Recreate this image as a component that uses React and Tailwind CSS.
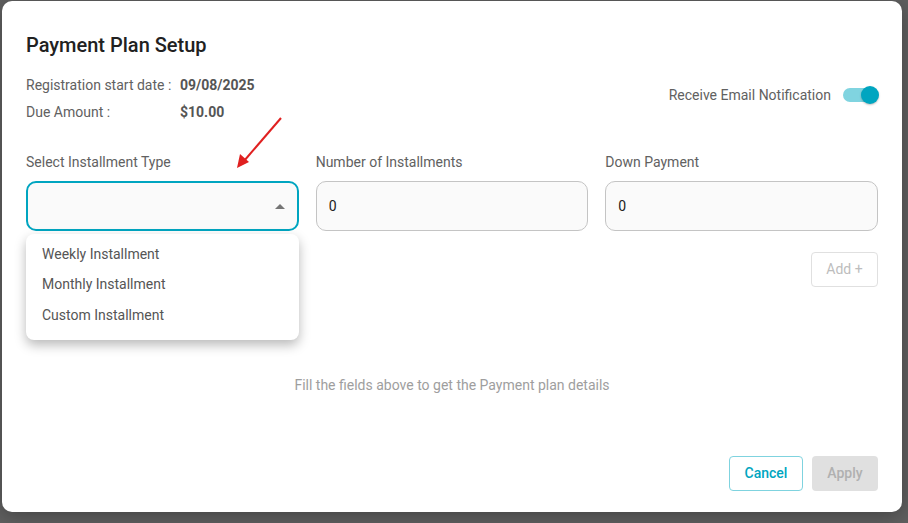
import { useState } from 'react';

const options = ["Weekly Installment", "Monthly Installment", "Custom Installment"];

const App = () => {
  const [notify, setNotify] = useState(true);
  const [open, setOpen] = useState(true);

  return (
    <div className="w-[908px] h-[523px] overflow-hidden bg-[#606060] pt-[1px] pl-[2px] font-['Roboto',sans-serif]">
      <div className="relative w-[900px] h-[511px] bg-white rounded-[10px] flex flex-col px-6 pt-[30px] pb-[21px] shadow-[0_4px_20px_rgba(0,0,0,0.3)]">
        <h1 className="text-[20px] leading-[28px] font-medium text-[#212121]">Payment Plan Setup</h1>

        <div className="flex justify-between items-start mt-[16px]">
          <div className="flex flex-col gap-[7px] text-[14px] leading-[20px] text-[#616161]">
            <div className="flex">
              <span className="w-[154px]">Registration start date :</span>
              <span className="font-bold text-[#555]">09/08/2025</span>
            </div>
            <div className="flex">
              <span className="w-[154px]">Due Amount :</span>
              <span className="font-bold text-[#555]">$10.00</span>
            </div>
          </div>
          <div className="flex items-center gap-3 mt-[10px] mr-[3px] h-[20px]">
            <span className="text-[14px] text-[#616161]">Receive Email Notification</span>
            <button onClick={() => setNotify(!notify)} className="relative w-[32px] h-[14px] rounded-full bg-[#80d4e0]">
              <span className="absolute right-[-4px] top-[-2px] w-[18px] h-[18px] rounded-full bg-[#00a5c0] shadow-[0_1px_2px_rgba(0,0,0,0.25)]" />
            </button>
          </div>
        </div>

        <div className="grid grid-cols-3 gap-x-[17px] mt-[30px] text-[14px]">
          <div className="relative">
            <div className="leading-[20px] text-[#616161]">Select Installment Type</div>
            <button onClick={() => setOpen(!open)} className="mt-[9px] w-full h-[50px] rounded-[10px] bg-[#fafafa] border-2 border-[#00a5c0] flex items-center justify-end pr-[12px]">
              <svg width="10" height="5" viewBox="0 0 10 5"><path d="M0 5 L5 0 L10 5 Z" fill="#757575" /></svg>
            </button>
            {open && (
              <div className="absolute left-0 top-[82px] w-full bg-white rounded-[8px] pt-[5px] pb-[9px] shadow-[0_5px_12px_rgba(0,0,0,0.28)] z-10">
                {options.map(o => (
                  <div key={o} className="px-4 h-[30.5px] flex items-center text-[#555]">{o}</div>
                ))}
              </div>
            )}
          </div>
          <div>
            <div className="leading-[20px] text-[#616161]">Number of Installments</div>
            <input defaultValue="0" className="mt-[9px] w-full h-[50px] rounded-[10px] bg-[#fafafa] border border-[#c4c4c4] px-[12px] text-[#212121] outline-none" />
          </div>
          <div>
            <div className="leading-[20px] text-[#616161]">Down Payment</div>
            <input defaultValue="0" className="mt-[9px] w-full h-[50px] rounded-[10px] bg-[#fafafa] border border-[#c4c4c4] px-[12px] text-[#212121] outline-none" />
          </div>
        </div>

        <div className="flex justify-end mt-[21px]">
          <button className="w-[67px] h-[35px] rounded-[4px] border border-[#e0e0e0] text-[14px] text-[#bdbdbd]">Add +</button>
        </div>

        <p className="mt-[88px] text-center text-[14px] leading-[20px] text-[#9e9e9e]">Fill the fields above to get the Payment plan details</p>

        <div className="mt-auto flex justify-end gap-[9px]">
          <button className="w-[74px] h-[35px] rounded-[4px] border border-[#7fd3df] text-[14px] font-medium text-[#00a5c0]">Cancel</button>
          <button className="w-[66px] h-[35px] rounded-[4px] bg-[#e0e0e0] text-[14px] font-medium text-[#b0b0b0]">Apply</button>
        </div>

        <svg className="absolute left-[232px] top-[114px] pointer-events-none" width="52" height="56" viewBox="0 0 52 56">
          <line x1="47" y1="3" x2="10" y2="46" stroke="#e02020" strokeWidth="2" />
          <path d="M3 53 L6 39 L15 47 Z" fill="#e02020" />
        </svg>
      </div>
    </div>
  );
};
export default App;
